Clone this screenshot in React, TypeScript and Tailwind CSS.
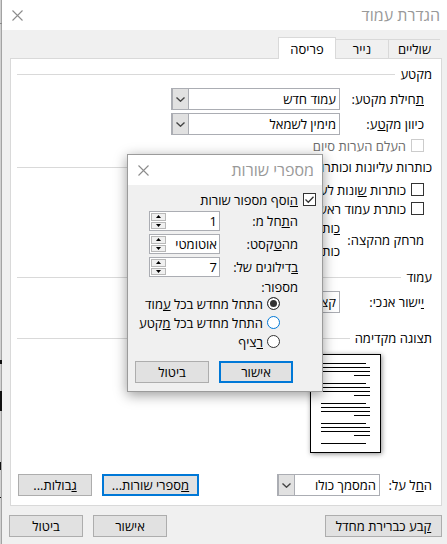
import { useState, type ReactNode } from "react";
import clsx from "clsx";

function CloseIcon() {
  return (
    <svg className="h-[11px] w-[11px]" viewBox="0 0 11 11" fill="none" stroke="#8c8c8c" strokeWidth={1.1}>
      <path d="M0.5 0.5l10 10M10.5 0.5l-10 10" />
    </svg>
  );
}

function Heading({ children }: { children: ReactNode }) {
  return (
    <div className="flex h-5 items-center gap-[5px]">
      <h3 className="whitespace-nowrap">{children}</h3>
      <div className="h-px flex-1 bg-[#d9d9d9]" />
    </div>
  );
}

interface SelectProps {
  id: string;
  value: string;
  className: string;
}

function Select({ id, value, className }: SelectProps) {
  return (
    <div className={clsx("relative h-[22px]", className)}>
      <select id={id} className="block h-full w-full appearance-none border border-[#abadb3] bg-white pr-[3px] pl-5 outline-none">
        <option>{value}</option>
      </select>
      <span className="pointer-events-none absolute inset-y-0 left-0 flex w-[18px] items-center justify-center border border-l-2 border-[#abadb3] bg-[#e1e1e1]">
        <svg className="h-[5px] w-[9px]" viewBox="0 0 9 5" fill="none" stroke="#444" strokeWidth={1.4}>
          <path d="M0.5 0.5l4 3.7l4 -3.7" />
        </svg>
      </span>
    </div>
  );
}

interface CheckProps {
  children: ReactNode;
  checked?: boolean;
  disabled?: boolean;
}

function Check({ children, checked, disabled }: CheckProps) {
  return (
    <label className={clsx("flex h-[19px] items-center gap-[5px] whitespace-nowrap", disabled && "text-[#6d6d6d]")}>
      <span className="relative flex h-[13px] w-[13px] shrink-0">
        <input
          type="checkbox"
          defaultChecked={checked}
          disabled={disabled}
          className="peer h-[13px] w-[13px] appearance-none border border-[#333] bg-white disabled:border-[#ccc]"
        />
        <svg className="pointer-events-none absolute inset-0 hidden peer-checked:block" viewBox="0 0 13 13" fill="none" stroke="#333" strokeWidth={1.3}>
          <path d="M2.5 6.5l2.8 2.8l5.2 -5.6" />
        </svg>
      </span>
      <span>{children}</span>
    </label>
  );
}

interface ButtonProps {
  children: ReactNode;
  className: string;
  primary?: boolean;
}

function Button({ children, className, primary }: ButtonProps) {
  return (
    <button
      type="button"
      className={clsx(
        "flex h-[22px] items-center justify-center whitespace-nowrap bg-[#e1e1e1]",
        primary ? "border-2 border-[#0078d7]" : "border border-[#adadad]",
        className
      )}
    >
      <span>{children}</span>
    </button>
  );
}

function Spinner({ id, value, label }: { id: string; value: string; label: ReactNode }) {
  return (
    <div className="flex h-5 items-center justify-between">
      <label htmlFor={id} className="whitespace-nowrap">{label}</label>
      <div className="flex h-5 w-[71px] border border-[#abadb3] bg-white">
        <input id={id} defaultValue={value} className="w-0 flex-1 bg-transparent pr-0.5 outline-none" />
        <div className="flex w-4 flex-col gap-px p-px pr-0">
          <button type="button" aria-label="+" className="flex flex-1 items-center justify-center border border-[#b8b8b8] bg-[#f0f0f0]">
            <svg className="h-[3px] w-[5px]" viewBox="0 0 5 3">
              <path d="M0 3L2.5 0L5 3z" />
            </svg>
          </button>
          <button type="button" aria-label="-" className="flex flex-1 items-center justify-center border border-[#b8b8b8] bg-[#f0f0f0]">
            <svg className="h-[3px] w-[5px]" viewBox="0 0 5 3">
              <path d="M0 0L2.5 3L5 0z" />
            </svg>
          </button>
        </div>
      </div>
    </div>
  );
}

function PagePreview() {
  // full lines, with a shorter one opening and closing each paragraph
  const paragraphs = [9, 29, 49, 69];
  return (
    <svg className="mt-[6px] mr-[51px] h-[99px] w-[71px] shadow-[1px_1px_5px_rgba(0,0,0,0.45)]" viewBox="0 0 71 99" shapeRendering="crispEdges">
      <rect x="0.5" y="0.5" width="70" height="98" fill="#fff" stroke="#000" />
      {paragraphs.map((y) => (
        <g key={y}>
          <rect x="11" y={y} width="45" height="1" />
          <rect x="11" y={y + 4} width="49" height="1" />
          <rect x="11" y={y + 8} width="49" height="1" />
          <rect x="44" y={y + 12} width="16" height="1" />
        </g>
      ))}
      <rect x="11" y="89" width="45" height="1" />
    </svg>
  );
}

function LineNumbersDialog() {
  const [restart, setRestart] = useState("page");
  const options = [
    { id: "page", color: "border-[#333]", label: <>התחל מחדש בכל <u>ע</u>מוד</> },
    { id: "section", color: "border-[#0078d7]", label: <>התחל מחדש בכל <u>מ</u>קטע</> },
    { id: "none", color: "border-[#333]", label: <><u>ר</u>ציף</> },
  ];

  return (
    <div role="dialog" className="absolute top-[154px] right-[124px] w-[196px] border border-[#9b9b9b] bg-[#f0f0f0] shadow-[0_3px_12px_rgba(0,0,0,0.4)]">
      <div className="flex h-[30px] items-center justify-between bg-white pr-2 pl-2.5 text-base text-[#999]">
        <h2>מספרי שורות</h2>
        <button type="button" aria-label="סגור"><CloseIcon /></button>
      </div>
      <div className="pt-[5px] pr-[6px] pb-2 pl-[7px]">
        <Check checked><u>ה</u>וסף מספור שורות</Check>
        <div className="mt-0.5 flex flex-col gap-[3px] pr-[18px] pl-[14px]">
          <Spinner id="start" value="1" label={<>ה<u>ת</u>חל מ:</>} />
          <Spinner id="from-text" value="אוטומטי" label={<>מה<u>ט</u>קסט:</>} />
          <Spinner id="count" value="7" label={<><u>ב</u>דילוגים של:</>} />
        </div>
        <fieldset className="pr-[18px]">
          <legend className="h-[17px] leading-5">מספור:</legend>
          {options.map((o) => (
            <label key={o.id} className="mr-[18px] flex h-[19px] items-center gap-1 whitespace-nowrap">
              <input
                type="radio"
                name="restart"
                checked={restart === o.id}
                onChange={() => setRestart(o.id)}
                className={clsx(
                  "h-[13px] w-[13px] shrink-0 appearance-none rounded-full border bg-white checked:bg-[#333] checked:shadow-[inset_0_0_0_2px_#fff]",
                  o.color
                )}
              />
              <span>{o.label}</span>
            </label>
          ))}
        </fieldset>
        <div className="mt-[10px] flex gap-[10px] pr-[23px]">
          <Button primary className="w-[74px]">אישור</Button>
          <Button className="w-[74px]">ביטול</Button>
        </div>
      </div>
    </div>
  );
}

export default function App() {
  return (
    <div dir="rtl" className="flex min-h-screen bg-white font-['Open_Sans',sans-serif] text-[13px] leading-[18px] text-black">
      <main className="relative flex-1 bg-[#f0f0f0]">
        <div className="flex h-[30px] items-center justify-between bg-white pr-[7px] pl-2.5 text-base text-[#999]">
          <h1>הגדרת עמוד</h1>
          <button type="button" aria-label="סגור"><CloseIcon /></button>
        </div>

        {/* Tabs */}
        <div role="tablist" className="relative z-10 mt-[7px] -mb-px flex h-[22px] items-end pr-[7px]">
          <button type="button" role="tab" className="h-5 w-[52px] border-y border-l border-[#d9d9d9]">שוליים</button>
          <button type="button" role="tab" className="h-5 w-[52px] border-y border-[#d9d9d9]">נייר</button>
          <button type="button" role="tab" aria-selected className="h-[22px] w-[58px] border border-b-0 border-[#d9d9d9] bg-white">פריסה</button>
        </div>

        <section className="mr-[5px] ml-2 border border-[#d9d9d9] bg-white pt-[5px] pr-[9px] pb-[9px] pl-[6px]">
          <Heading>מקטע</Heading>
          <div className="mt-1 flex flex-col gap-[3px] pr-2">
            <div className="flex items-center">
              <label htmlFor="section-start" className="w-[84px] whitespace-nowrap"><u>ת</u>חילת מקטע:</label>
              <Select id="section-start" value="עמוד חדש" className="w-[169px]" />
            </div>
            <div className="flex items-center">
              <label htmlFor="direction" className="w-[84px] whitespace-nowrap">כיוון מק<u>ט</u>ע:</label>
              <Select id="direction" value="מימין לשמאל" className="w-[169px]" />
            </div>
          </div>
          <div className="mt-px mb-0.5 pr-2">
            <Check disabled>העלם הערות סיום</Check>
          </div>

          <Heading>כותרות עליונות וכותרות</Heading>
          <div className="mt-[3px] pr-2">
            <Check>כותרות <u>ש</u>ונות לעמוד</Check>
            <Check>כותרת עמוד ראשון</Check>
            <div className="flex items-center">
              <div className="w-[84px] whitespace-nowrap">מרחק מהקצה:</div>
              <div className="flex flex-col gap-[3px] leading-5">
                <div><u>כ</u>ותרת</div>
                <div>כותרת</div>
              </div>
            </div>
          </div>

          <div className="mt-[6px]">
            <Heading>עמוד</Heading>
          </div>
          <div className="mt-1 mb-[15px] flex items-center pr-2">
            <label htmlFor="align" className="w-[84px] whitespace-nowrap"><u>י</u>ישור אנכי:</label>
            <Select id="align" value="קצה" className="w-[169px]" />
          </div>

          <Heading>תצוגה מקדימה</Heading>
          <PagePreview />

          <div className="mt-[21px] flex items-center">
            <label htmlFor="apply" className="w-[52px] whitespace-nowrap">ה<u>ח</u>ל על:</label>
            <Select id="apply" value="המסמך כולו" className="w-[103px]" />
            <div className="mr-auto flex gap-[10px] pl-px">
              <Button primary className="w-[97px]"><u>מ</u>ספרי שורות...</Button>
              <Button className="w-[74px]"><u>ג</u>בולות...</Button>
            </div>
          </div>
        </section>

        <div className="mt-[9px] flex gap-[10px] pr-[5px] pb-[6px] pl-[7px]">
          <Button className="w-[117px]"><u>ק</u>בע כברירת מחדל</Button>
          <Button className="mr-auto w-[74px]">אישור</Button>
          <Button className="w-[74px]">ביטול</Button>
        </div>

        <LineNumbersDialog />
      </main>

      {/* Document edge behind the window */}
      <svg className="h-[544px] w-[2px]" viewBox="0 0 2 544" shapeRendering="crispEdges">
        <rect width="2" height="544" fill="#d0d0d0" />
        <rect x="1" width="1" height="544" fill="#a3a3a3" />
        <path d="M0 23h2v1h-2z" fill="#8a8a8a" />
        <path d="M0 360h2v4h-2zM0 391h2v20h-2zM0 462h1v8h-1zM0 497h1v1h-1z" fill="#111" />
      </svg>
    </div>
  );
}
